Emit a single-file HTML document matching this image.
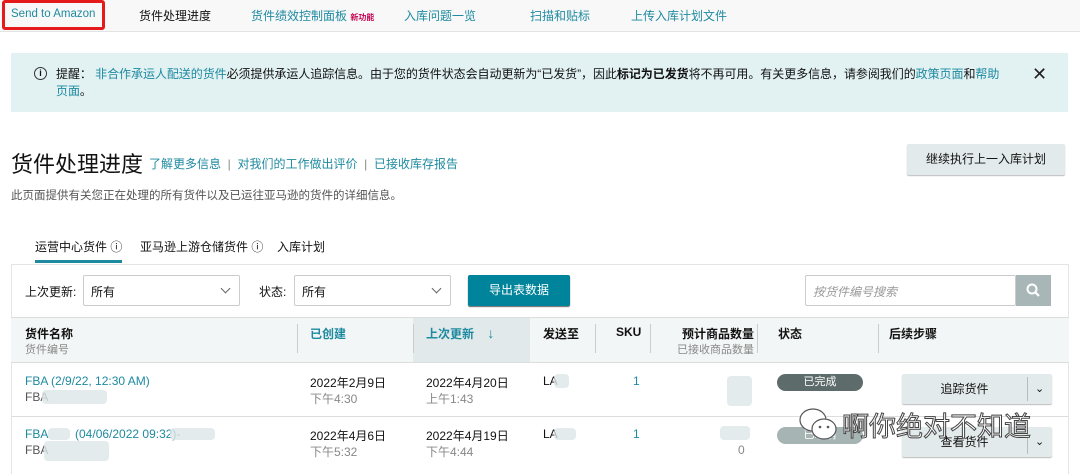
<!DOCTYPE html>
<html><head><meta charset="utf-8"><style>
*{margin:0;padding:0;box-sizing:border-box}
body{width:1080px;height:470px;overflow:hidden;background:#fff;font-family:"Liberation Sans","Noto Sans CJK SC",sans-serif;color:#111;position:relative;font-size:12px}
.a{position:absolute;white-space:nowrap}
.link{color:#1e8aa0}
.nav{position:absolute;left:0;top:0;width:1080px;height:32px;background:#f8f8f8;border-bottom:1px solid #e3e3e3}
.red{position:absolute;left:2px;top:0;width:103px;height:30px;border:3px solid #e51b1b;border-radius:3px}
.sel{position:absolute;height:31px;border:1px solid #ccc;background:#fff;font-size:12px;padding:7px 0 0 7px;border-radius:2px}
.chev{position:absolute;right:10px;top:9px;width:7px;height:7px;border-right:1.3px solid #666;border-bottom:1.3px solid #666;transform:rotate(45deg)}
.sep{position:absolute;width:1px;background:#ccc}
.gray{color:#888}
.pill{position:absolute;height:17px;border-radius:9px;color:#fff;font-size:11px;text-align:center;line-height:17px}
.btn{position:absolute;background:#e3eaeb;box-shadow:0 1px 1px #bbb;border-radius:2px;font-size:12px;text-align:center}
.blur{position:absolute;background:#dde6e8;border-radius:4px;opacity:.8}
</style></head><body>
<div class="nav"></div>
<div class="red"></div>
<div class="a link" style="left:11px;top:8px;font-size:11.5px">Send to Amazon</div>
<div class="a" style="left:139px;top:7px;font-size:12px">货件处理进度</div>
<div class="a link" style="left:251px;top:7px;font-size:12px">货件绩效控制面板 <span style="color:#c40050;font-size:8px;font-weight:bold">新功能</span></div>
<div class="a link" style="left:404px;top:7px;font-size:12px">入库问题一览</div>
<div class="a link" style="left:530px;top:7px;font-size:12px">扫描和贴标</div>
<div class="a link" style="left:631px;top:7px;font-size:12px">上传入库计划文件</div>

<div class="a" style="left:11px;top:53px;width:1057px;height:59px;background:#e2f1f2"></div>
<div class="a" style="left:34px;top:67px;width:13px;height:13px;border:1.3px solid #333;border-radius:50%;font-size:9px;text-align:center;line-height:11px;font-weight:bold">i</div>
<div class="a" style="left:56px;top:66px;font-size:12px;line-height:17px;color:#111;letter-spacing:-0.05px">提醒： <span class="link">非合作承运人配送的货件</span>必须提供承运人追踪信息。由于您的货件状态会自动更新为“已发货”，因此<b>标记为已发货</b>将不再可用。有关更多信息，请参阅我们的<span class="link">政策页面</span>和<span class="link">帮助</span><br><span class="link">页面</span>。</div>
<div class="a" style="left:1032px;top:64px;font-size:18px;color:#222">✕</div>

<div class="a" style="left:11px;top:147px;font-size:22px;color:#111">货件处理进度</div>
<div class="a link" style="left:149px;top:155px;font-size:12px">了解更多信息 <span style="color:#888">&nbsp;|&nbsp;</span> 对我们的工作做出评价 <span style="color:#888">&nbsp;|&nbsp;</span> 已接收库存报告</div>
<div class="btn" style="left:907px;top:144px;width:158px;height:31px;line-height:30px">继续执行上一入库计划</div>
<div class="a" style="left:11px;top:187px;font-size:11.5px;color:#555">此页面提供有关您正在处理的所有货件以及已运往亚马逊的货件的详细信息。</div>

<div class="a" style="left:35px;top:238px;font-size:12px;color:#111">运营中心货件 ⓘ</div>
<div class="a" style="left:35px;top:260px;width:87px;height:3px;background:#1e8aa0"></div>
<div class="a" style="left:140px;top:238px;font-size:12px">亚马逊上游仓储货件 ⓘ</div>
<div class="a" style="left:277px;top:238px;font-size:12px">入库计划</div>

<div class="a" style="left:11px;top:264px;width:1058px;height:210px;border:1px solid #e5e5e5;border-bottom:none"></div>
<div class="a" style="left:25px;top:283px;font-size:12px">上次更新:</div>
<div class="sel" style="left:83px;top:275px;width:157px">所有<div class="chev"></div></div>
<div class="a" style="left:259px;top:283px;font-size:12px">状态:</div>
<div class="sel" style="left:294px;top:275px;width:157px">所有<div class="chev"></div></div>
<div class="a" style="left:468px;top:275px;width:102px;height:31px;background:#00849b;color:#fff;text-align:center;line-height:30px;border-radius:2px;box-shadow:0 1px 1px #666">导出表数据</div>
<div class="sel" style="left:805px;top:275px;width:211px;color:#999;font-style:italic">按货件编号搜索</div>
<div class="a" style="left:1016px;top:275px;width:35px;height:31px;background:#a9b6b7"><svg width="35" height="31"><circle cx="16" cy="14" r="4.5" fill="none" stroke="#fff" stroke-width="2"/><line x1="19.5" y1="17.5" x2="23" y2="21" stroke="#fff" stroke-width="2.2"/></svg></div>

<div class="a" style="left:11px;top:317px;width:1058px;height:46px;background:#f3f6f6;border-top:1px solid #ddd;border-bottom:1px solid #ddd"></div>
<div class="a" style="left:413px;top:318px;width:117px;height:44px;background:#e1e9ea"></div>
<div class="a" style="left:25px;top:325px;font-weight:bold;font-size:12px">货件名称</div>
<div class="a gray" style="left:25px;top:341px;font-size:11px">货件编号</div>
<div class="sep" style="left:297px;top:324px;height:29px"></div>
<div class="a link" style="left:310px;top:325px;font-weight:bold">已创建</div>
<div class="sep" style="left:413px;top:324px;height:29px"></div>
<div class="a link" style="left:426px;top:325px;font-weight:bold">上次更新 &nbsp;&nbsp;&nbsp;<span style="font-weight:normal;font-size:14px">↓</span></div>
<div class="a" style="left:543px;top:325px;font-weight:bold">发送至</div>
<div class="sep" style="left:595px;top:324px;height:29px"></div>
<div class="a" style="left:616px;top:325px;font-weight:bold">SKU</div>
<div class="sep" style="left:650px;top:324px;height:29px"></div>
<div class="a" style="left:682px;top:325px;font-weight:bold">预计商品数量</div>
<div class="a gray" style="left:677px;top:341px;font-size:11px">已接收商品数量</div>
<div class="sep" style="left:757px;top:324px;height:29px"></div>
<div class="a" style="left:778px;top:325px;font-weight:bold">状态</div>
<div class="sep" style="left:878px;top:324px;height:29px"></div>
<div class="a" style="left:889px;top:325px;font-weight:bold">后续步骤</div>

<div class="a link" style="left:25px;top:374px">FBA (2/9/22, 12:30 AM)</div>
<div class="a" style="left:25px;top:390px;color:#555">FBA</div>
<div class="blur" style="left:42px;top:390px;width:65px;height:14px"></div>
<div class="a" style="left:310px;top:374px">2022年2月9日</div>
<div class="a gray" style="left:310px;top:390px">下午4:30</div>
<div class="a" style="left:426px;top:374px">2022年4月20日</div>
<div class="a gray" style="left:426px;top:390px">上午1:43</div>
<div class="a" style="left:543px;top:374px">LA</div>
<div class="blur" style="left:554px;top:374px;width:15px;height:14px"></div>
<div class="a link" style="left:633px;top:374px">1</div>
<div class="blur" style="left:727px;top:376px;width:25px;height:30px"></div>
<div class="pill" style="left:777px;top:374px;width:86px;background:#5e6b6b">已完成</div>
<div class="btn" style="left:902px;top:374px;width:150px;height:30px;line-height:30px"><span style="position:absolute;left:0;width:125px;text-align:center">追踪货件</span><span style="position:absolute;left:125px;top:3px;width:1px;height:24px;background:#bbb"></span><span style="position:absolute;left:133px;top:0;font-size:11px">⌄</span></div>
<div class="a" style="left:11px;top:416px;width:1058px;height:1px;background:#ddd"></div>

<div class="a link" style="left:25px;top:427px">FBA&nbsp;&nbsp;&nbsp;&nbsp;&nbsp;&nbsp;&nbsp;&nbsp;(04/06/2022 09:32)-</div>
<div class="blur" style="left:48px;top:428px;width:22px;height:12px"></div>
<div class="blur" style="left:170px;top:428px;width:45px;height:12px"></div>
<div class="a" style="left:25px;top:443px;color:#555">FBA</div>
<div class="blur" style="left:44px;top:441px;width:65px;height:20px"></div>
<div class="a" style="left:310px;top:427px">2022年4月6日</div>
<div class="a gray" style="left:310px;top:443px">下午5:32</div>
<div class="a" style="left:426px;top:427px">2022年4月19日</div>
<div class="a gray" style="left:426px;top:443px">下午4:44</div>
<div class="a" style="left:543px;top:427px">LA</div>
<div class="blur" style="left:554px;top:428px;width:22px;height:12px"></div>
<div class="a link" style="left:633px;top:427px">1</div>
<div class="blur" style="left:720px;top:426px;width:30px;height:14px"></div>
<div class="a gray" style="left:738px;top:443px">0</div>
<div class="pill" style="left:777px;top:427px;width:86px;background:#a7b4b4">已取消</div>
<div class="btn" style="left:902px;top:427px;width:150px;height:30px;line-height:30px"><span style="position:absolute;left:0;width:125px;text-align:center">查看货件</span><span style="position:absolute;left:125px;top:3px;width:1px;height:24px;background:#bbb"></span><span style="position:absolute;left:133px;top:0;font-size:11px">⌄</span></div>

<svg class="a" style="left:796px;top:405px" width="45" height="40"><ellipse cx="17" cy="15" rx="13" ry="11" fill="#fff" stroke="#555" stroke-width="1.2"/><ellipse cx="28" cy="24" rx="12" ry="10" fill="#fff" stroke="#555" stroke-width="1.2"/><circle cx="24" cy="22" r="1.3" fill="#555"/><circle cx="32" cy="22" r="1.3" fill="#555"/></svg>
<div class="a" style="left:842px;top:405px;font-size:27px;color:#fff;-webkit-text-stroke:1px #444;font-family:'Noto Sans CJK SC',sans-serif">啊你绝对不知道</div>
</body></html>
